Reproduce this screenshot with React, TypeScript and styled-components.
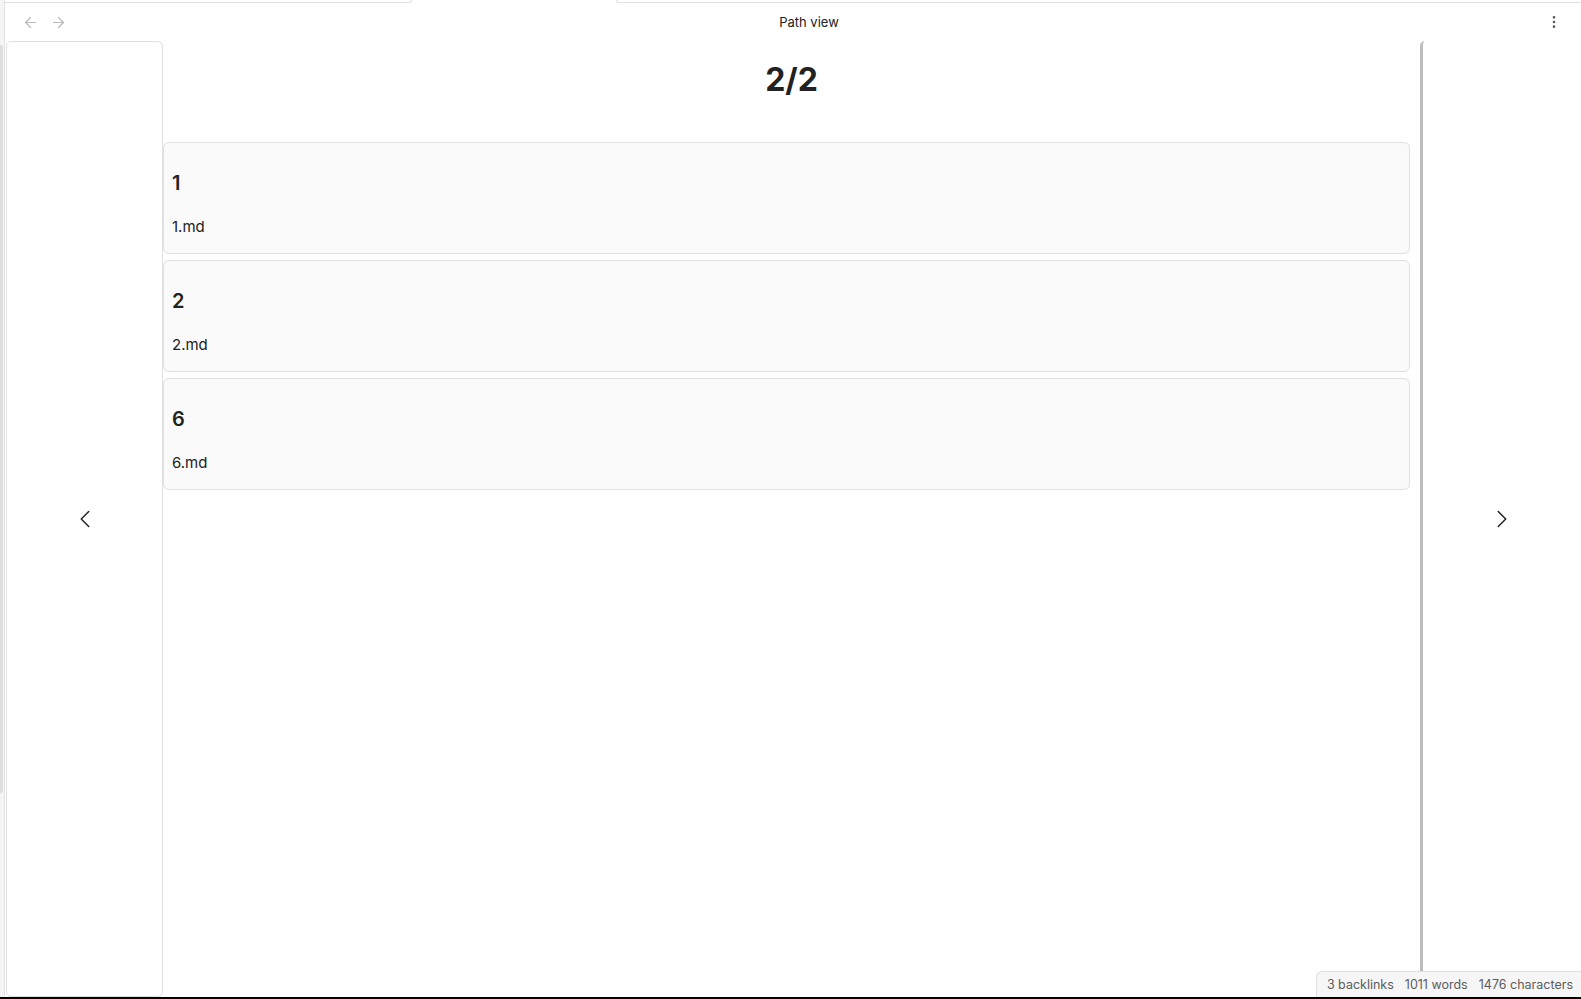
import * as React from 'react';
import styled, { createGlobalStyle } from 'styled-components';
import { ArrowLeft, ArrowRight, ChevronLeft, ChevronRight, EllipsisVertical } from 'lucide-react';

const GlobalStyle = createGlobalStyle`
  html, body {
    margin: 0;
    padding: 0;
    background: #fff;
  }
  body {
    font-family: Inter, "Noto Sans", sans-serif;
    color: #222;
  }
  * {
    box-sizing: border-box;
  }
`;

const Window = styled.div`
  width: 1581px;
  height: 999px;
  display: flex;
  flex-direction: column;
  overflow: hidden;
  position: relative;
  background: #fff;
`;

const Frame = styled.div`
  flex: 1;
  display: flex;
  min-height: 0;
`;

const BottomEdge = styled.div`
  height: 2px;
  background: #000;
`;

const Gutter = styled.div`
  width: 5px;
  flex-shrink: 0;
  background: #f4f4f4;
  border-right: 1px solid #e2e2e2;
  padding-top: 45px;
`;

const Thumb = styled.div`
  width: 3px;
  height: 748px;
  background: #dedede;
  border-radius: 0 2px 2px 0;
`;

const Workspace = styled.div`
  flex: 1;
  display: flex;
  flex-direction: column;
  min-width: 0;
`;

const TabEdge = styled.div`
  height: 3px;
  display: flex;
`;

const TabSegment = styled.div<{ $side: 'left' | 'right' }>`
  height: 3px;
  border-bottom: 1px solid #e0e0e0;
  ${(p) =>
    p.$side === 'left'
      ? `width: 407px; border-right: 1px solid #e0e0e0; border-bottom-right-radius: 5px;`
      : `flex: 1; margin-left: 204px; border-left: 1px solid #e0e0e0; border-bottom-left-radius: 5px;`}
`;

const Header = styled.div`
  height: 38px;
  display: flex;
  align-items: center;
`;

const NavGroup = styled.div`
  width: 70px;
  display: flex;
  gap: 4px;
  padding-left: 13px;
`;

const IconButton = styled.button<{ $muted?: boolean }>`
  width: 24px;
  height: 24px;
  padding: 0;
  border: none;
  background: none;
  display: flex;
  align-items: center;
  justify-content: center;
  color: ${(p) => (p.$muted ? '#bababa' : '#5c5c5c')};
`;

const ViewTitle = styled.div`
  flex: 1;
  text-align: center;
  font-size: 13px;
  color: #222;
`;

const MenuGroup = styled.div`
  width: 38px;
  display: flex;
  padding-right: 16px;
  justify-content: flex-end;
`;

const Body = styled.div`
  flex: 1;
  display: flex;
  min-height: 0;
  padding-left: 1px;
`;

const SidePane = styled.div`
  width: 157px;
  flex-shrink: 0;
  border: 1px solid #e0e0e0;
  border-radius: 5px;
  display: flex;
  align-items: center;
  justify-content: center;
  color: #222;
`;

const Center = styled.div`
  flex: 1;
  display: flex;
  flex-direction: column;
  min-width: 0;
`;

const PageTitle = styled.h1`
  margin: 20px 0 43px;
  text-align: center;
  font-size: 32px;
  line-height: 1.2;
  font-weight: 700;
  color: #222;
`;

const CardList = styled.div`
  display: flex;
  flex-direction: column;
  gap: 6px;
  padding-right: 10px;
`;

const Card = styled.div`
  background: #fafafa;
  border: 1px solid #e0e0e0;
  border-radius: 6px;
  padding: 25px 8px 15px;
`;

const CardHeading = styled.div`
  font-size: 20px;
  line-height: 30px;
  font-weight: 600;
  margin-bottom: 18px;
`;

const CardPath = styled.div`
  font-size: 15px;
  line-height: 22px;
`;

const RightPane = styled.div`
  width: 161px;
  flex-shrink: 0;
  border-left: 3px solid #bdbdbd;
  border-top-left-radius: 5px;
  display: flex;
  align-items: center;
  justify-content: center;
  color: #222;
`;

const StatusBar = styled.div`
  position: absolute;
  right: 0;
  bottom: 2px;
  height: 26px;
  display: flex;
  align-items: center;
  gap: 11px;
  padding: 0 8px 0 10px;
  background: #f6f6f6;
  border-top: 1px solid #e0e0e0;
  border-left: 1px solid #e0e0e0;
  border-top-left-radius: 6px;
  font-size: 12.5px;
  color: #5c5c5c;
`;

const notes = [
  { title: '1', file: '1.md' },
  { title: '2', file: '2.md' },
  { title: '6', file: '6.md' },
];

export default function App() {
  return (
    <>
      <GlobalStyle />
      <Window>
        <Frame>
          <Gutter>
            <Thumb />
          </Gutter>
          <Workspace>
            <TabEdge>
              <TabSegment $side="left" />
              <TabSegment $side="right" />
            </TabEdge>
            <Header>
              <NavGroup>
                <IconButton $muted>
                  <ArrowLeft size={17} strokeWidth={1.75} />
                </IconButton>
                <IconButton $muted>
                  <ArrowRight size={17} strokeWidth={1.75} />
                </IconButton>
              </NavGroup>
              <ViewTitle>Path view</ViewTitle>
              <MenuGroup>
                <IconButton>
                  <EllipsisVertical size={16} strokeWidth={2} />
                </IconButton>
              </MenuGroup>
            </Header>
            <Body>
              <SidePane>
                <ChevronLeft size={30} strokeWidth={1.2} />
              </SidePane>
              <Center>
                <PageTitle>2/2</PageTitle>
                <CardList>
                  {notes.map((n) => (
                    <Card key={n.file}>
                      <CardHeading>{n.title}</CardHeading>
                      <CardPath>{n.file}</CardPath>
                    </Card>
                  ))}
                </CardList>
              </Center>
              <RightPane>
                <ChevronRight size={30} strokeWidth={1.2} />
              </RightPane>
            </Body>
          </Workspace>
        </Frame>
        <BottomEdge />
        <StatusBar>
          <span>3 backlinks</span>
          <span>1011 words</span>
          <span>1476 characters</span>
        </StatusBar>
      </Window>
    </>
  );
}
